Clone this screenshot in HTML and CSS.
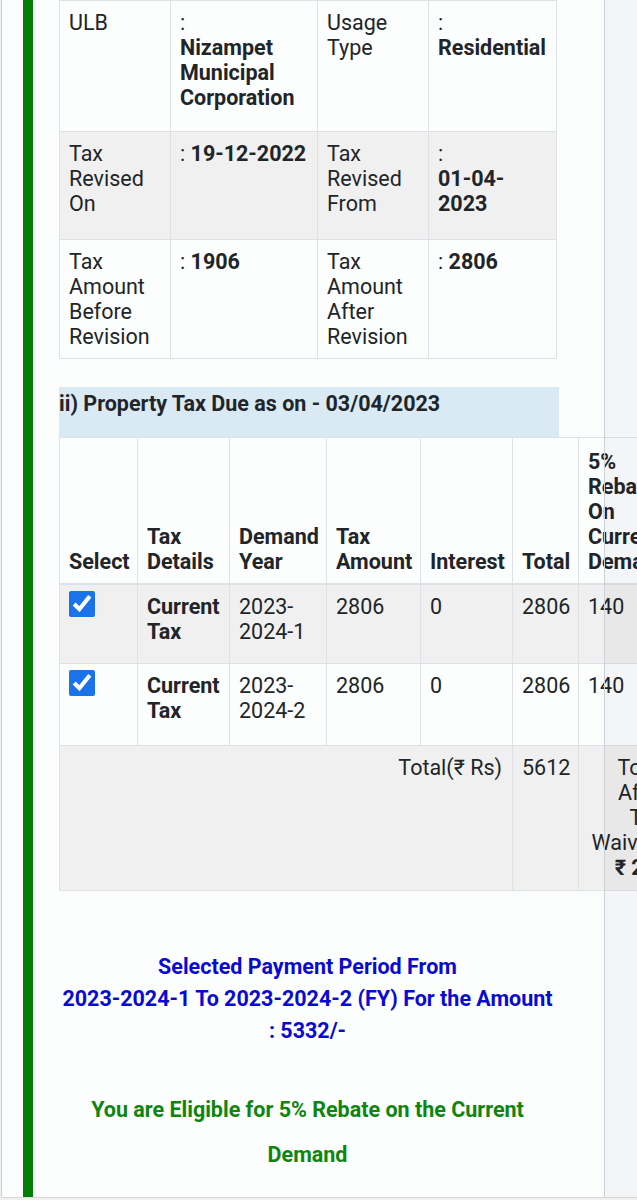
FILE: index.html
```html
<!DOCTYPE html>
<html lang="en">
<head>
    <meta charset="UTF-8">
    <meta name="viewport" content="width=device-width, initial-scale=1.0">
    <title>Property Tax Due</title>
    <link rel="stylesheet" href="styles.css">
</head>
<body>
    <div class="page">
        <div class="panel">
            <table class="info">
                <colgroup>
                    <col class="c-label">
                    <col class="c-value">
                    <col class="c-label">
                    <col class="c-value2">
                </colgroup>
                <tr class="r-ulb">
                    <td>ULB</td>
                    <td>:<br><b>Nizampet Municipal Corporation</b></td>
                    <td>Usage Type</td>
                    <td>:<br><b>Residential</b></td>
                </tr>
                <tr class="r-revised striped">
                    <td>Tax Revised On</td>
                    <td>: <b>19-12-2022</b></td>
                    <td>Tax Revised From</td>
                    <td>:<br><b>01-04-2023</b></td>
                </tr>
                <tr class="r-amount">
                    <td>Tax Amount Before Revision</td>
                    <td>: <b>1906</b></td>
                    <td>Tax Amount After Revision</td>
                    <td>: <b>2806</b></td>
                </tr>
            </table>

            <div class="due-head">ii) Property Tax Due as on - 03/04/2023</div>

            <table class="dues">
                <colgroup>
                    <col class="c-select">
                    <col class="c-details">
                    <col class="c-year">
                    <col class="c-amount">
                    <col class="c-interest">
                    <col class="c-total">
                    <col class="c-rebate">
                    <col class="c-more">
                </colgroup>
                <thead>
                    <tr>
                        <th>Select</th>
                        <th>Tax Details</th>
                        <th>Demand Year</th>
                        <th>Tax Amount</th>
                        <th>Interest</th>
                        <th>Total</th>
                        <th>5%<br>Rebate<br>On<br>Current<br>Demand</th>
                        <th>Net Amount</th>
                    </tr>
                </thead>
                <tbody>
                    <tr class="r-due striped">
                        <td><input type="checkbox" class="pick" checked></td>
                        <td class="bold">Current Tax</td>
                        <td>2023-2024-1</td>
                        <td>2806</td>
                        <td>0</td>
                        <td>2806</td>
                        <td>140</td>
                        <td>2666</td>
                    </tr>
                    <tr class="r-due2">
                        <td><input type="checkbox" class="pick" checked></td>
                        <td class="bold">Current Tax</td>
                        <td>2023-2024-2</td>
                        <td>2806</td>
                        <td>0</td>
                        <td>2806</td>
                        <td>140</td>
                        <td>2666</td>
                    </tr>
                    <tr class="r-sum striped">
                        <td colspan="5" class="sum-label">Total(₹ Rs)</td>
                        <td>5612</td>
                        <td class="sum-rebate">Total<br>After<br>To<br>Waiver Rs.<br><b>₹ 280</b></td>
                        <td>5332</td>
                    </tr>
                </tbody>
            </table>

            <p class="period">Selected Payment Period From<br>2023-2024-1 To 2023-2024-2 (FY) For the Amount<br>: 5332/-</p>

            <p class="rebate-note">You are Eligible for 5% Rebate on the Current Demand</p>
        </div>
        <div class="edge"></div>
    </div>
</body>
</html>
```

FILE: styles.css
```css
body {
    margin: 0;
    background-color: #efefef;
    font-family: Roboto, "Noto Sans", Arial, sans-serif;
    font-size: 21.5px;
    line-height: 25px;
    color: #212529;
    overflow: hidden;
}
.page {
    position: relative;
    margin-left: 1px;
    border-left: 1px solid #d0d0d0;
    border-bottom: 1px solid #d6d6d6;
    background-color: #fcfdfd;
    height: 1197px;
    overflow: hidden;
}
.panel {
    margin-left: 21px;
    border-left: 10px solid #037d03;
    padding-left: 26px;
    width: 497px;
    height: 1197px;
}
.edge {
    position: absolute;
    top: 0;
    bottom: 0;
    left: 602px;
    width: 40px;
    border-left: 1px solid #cdd0d3;
    background-color: rgba(20, 30, 50, 0.035);
    pointer-events: none;
}

/* property info */
.info {
    border-collapse: collapse;
    table-layout: fixed;
    width: 497px;
}
.info .c-label { width: 111px; }
.info .c-value { width: 147px; }
.info .c-value2 { width: 128px; }
.info td {
    border: 1px solid #dee2e6;
    padding: 9px 10px 9px 9px;
    vertical-align: top;
}
.r-ulb { height: 131px; }
.r-revised { height: 108px; }
.r-amount { height: 117px; }
.striped td {
    background-color: #f0f0f0;
}

.due-head {
    margin-top: 28px;
    width: 500px;
    padding: 4px 0 21px;
    background-color: #d9eaf5;
    font-weight: bold;
}

/* dues table */
.dues {
    border-collapse: collapse;
    table-layout: fixed;
    width: 746px;
}
.dues .c-select { width: 78px; }
.dues .c-details { width: 92px; }
.dues .c-year { width: 97px; }
.dues .c-amount { width: 94px; }
.dues .c-interest { width: 92px; }
.dues .c-total { width: 66px; }
.dues .c-rebate { width: 127px; }
.dues .c-more { width: 100px; }
.dues th,
.dues td {
    border: 1px solid #dee2e6;
    padding: 9px 10px 9px 9px;
    text-align: left;
    vertical-align: top;
}
.dues th {
    vertical-align: bottom;
    border-bottom: 2px solid #dee2e6;
}
.dues thead tr { height: 146px; }
.r-due { height: 80px; }
.r-due2 { height: 82px; }
.r-sum { height: 145px; }
.dues .bold { font-weight: bold; }
.pick {
    display: block;
    width: 26px;
    height: 26px;
    margin: -3px 0 0 0;
    accent-color: #1a73e8;
}
.dues .sum-label { text-align: right; }
.dues .sum-rebate {
    text-align: center;
    white-space: nowrap;
}

.period {
    margin: 60px 0 0;
    text-align: center;
    color: #0a0ad0;
    font-weight: bold;
    line-height: 32px;
}
.rebate-note {
    margin: 40px 0 0;
    text-align: center;
    color: #0c860c;
    font-weight: bold;
    line-height: 45px;
}
```
